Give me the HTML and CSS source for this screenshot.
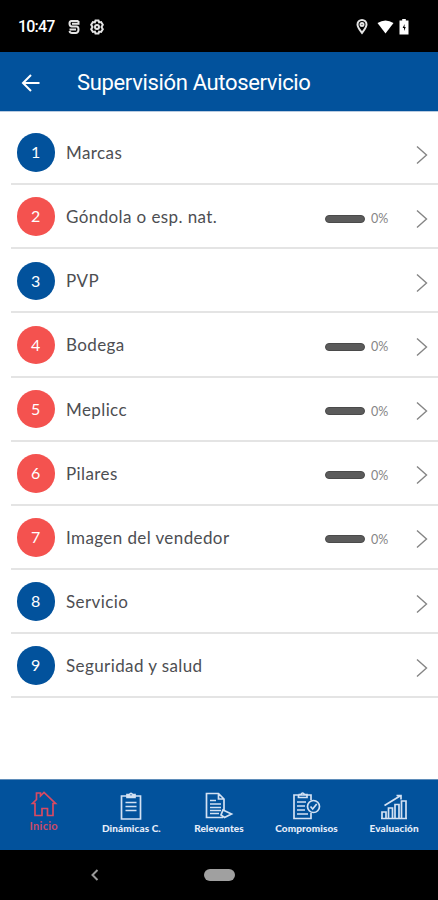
FILE: index.html
```html
<!DOCTYPE html>
<html lang="es">
<head>
<meta charset="utf-8">
<title>Supervisión Autoservicio</title>
<link rel="stylesheet" href="styles.css">
</head>
<body>
<div class="status">
  <span class="time">10:47</span>
  <svg class="st-s" width="12" height="16" viewBox="0 0 12 16"><path d="M10.500 2H3.500Q1.500 2 1.500 4.500T3.500 7.500H8.500Q10.500 7.500 10.500 10.500T8 14H4Q2 14 1.500 12M4 4.700H10.500V2M1.500 10.500H8" /></svg>
  <svg class="st-gear" width="16" height="16" viewBox="0 0 16 16"><path d="M6.500 1.500h3l.6 1.900 2-.4 1.700 2.800L12.500 8l1.300 2.200-1.700 2.800-2-.4-.6 1.900h-3l-.6-1.900-2 .4-1.700-2.800L3.500 8 2.200 5.800 3.900 3l2 .4z"/><circle cx="8" cy="8" r="2"/></svg>
  <span class="grow"></span>
  <svg class="st-pin" width="12" height="15" viewBox="0 0 12 15"><path d="M6 13.800C3.500 10.500 1.500 8.300 1.500 5.500a4.500 4.500 0 0 1 9 0C10.500 8.300 8.500 10.500 6 13.800z"/><circle cx="6" cy="5.500" r="1.500"/></svg>
  <svg class="st-wifi" width="17" height="14" viewBox="0 0 17 14"><path d="M.5 3Q8.500-2.200 16.500 3L8.500 13.500z"/></svg>
  <svg class="st-bat" width="10" height="16" viewBox="0 0 10 16"><path class="shell" d="M3.200 0h3.600v1.500H9.500V15.500H.5V1.500H3.200z"/><path class="bolt" d="M5.600 5L3.600 9h1.400v3L6.800 8H5.500z"/></svg>
</div>
<header class="bar">
  <svg class="back" width="20" height="18" viewBox="0 0 20 18"><path d="M18.500 9H2M10 1L2 9l8 8"/></svg>
  <h1>Supervisión Autoservicio</h1>
</header>
<main class="list">
  <div class="row"><span class="num">1</span><span class="name">Marcas</span><svg class="chev" width="12" height="20" viewBox="0 0 12 20"><path d="M1 1.500l9.500 8.500L1 18.500"/></svg></div>
  <div class="row"><span class="num red">2</span><span class="name">Góndola o esp. nat.</span><span class="meter"></span><span class="pct">0%</span><svg class="chev" width="12" height="20" viewBox="0 0 12 20"><path d="M1 1.500l9.500 8.500L1 18.500"/></svg></div>
  <div class="row"><span class="num">3</span><span class="name">PVP</span><svg class="chev" width="12" height="20" viewBox="0 0 12 20"><path d="M1 1.500l9.500 8.500L1 18.500"/></svg></div>
  <div class="row"><span class="num red">4</span><span class="name">Bodega</span><span class="meter"></span><span class="pct">0%</span><svg class="chev" width="12" height="20" viewBox="0 0 12 20"><path d="M1 1.500l9.500 8.500L1 18.500"/></svg></div>
  <div class="row"><span class="num red">5</span><span class="name">Meplicc</span><span class="meter"></span><span class="pct">0%</span><svg class="chev" width="12" height="20" viewBox="0 0 12 20"><path d="M1 1.500l9.500 8.500L1 18.500"/></svg></div>
  <div class="row"><span class="num red">6</span><span class="name">Pilares</span><span class="meter"></span><span class="pct">0%</span><svg class="chev" width="12" height="20" viewBox="0 0 12 20"><path d="M1 1.500l9.500 8.500L1 18.500"/></svg></div>
  <div class="row"><span class="num red">7</span><span class="name">Imagen del vendedor</span><span class="meter"></span><span class="pct">0%</span><svg class="chev" width="12" height="20" viewBox="0 0 12 20"><path d="M1 1.500l9.500 8.500L1 18.500"/></svg></div>
  <div class="row"><span class="num">8</span><span class="name">Servicio</span><svg class="chev" width="12" height="20" viewBox="0 0 12 20"><path d="M1 1.500l9.500 8.500L1 18.500"/></svg></div>
  <div class="row"><span class="num">9</span><span class="name">Seguridad y salud</span><svg class="chev" width="12" height="20" viewBox="0 0 12 20"><path d="M1 1.500l9.500 8.500L1 18.500"/></svg></div>
</main>
<nav class="tabs">
  <a class="tab active">
    <svg width="28" height="28" viewBox="0 0 28 28"><path d="M5 12.500H2.500L6.500 8.500V2H10.500v3L14 1.500 25.500 12.500H23V24.500H17.500V17.500H12V24.500H5z"/></svg>
    <span>Inicio</span>
  </a>
  <a class="tab">
    <svg width="28" height="28" viewBox="0 0 28 28"><path d="M4.500 4H23.500V27H4.500zM10 4.500V2.500H12.500Q14 0 15.500 2.500H18V5.500H10zM8.500 10.500H19.500M8.500 14.500H19.500M8.500 18.500H19.500"/></svg>
    <span>Dinámicas C.</span>
  </a>
  <a class="tab">
    <svg width="28" height="28" viewBox="0 0 28 28"><path d="M18 25.500H1.500V1.500H13.500L19 7V18M13.500 1.500V7H19M5 8.500H11M5 12H16M5 15.500H16M5 18.500H16M5 21.500H14M18 18L26.500 22 19.500 25.500 16 23z"/></svg>
    <span>Relevantes</span>
  </a>
  <a class="tab">
    <svg width="28" height="28" viewBox="0 0 28 28"><path d="M18 8V3H1V26.500H18V21M5.500 3V5.500H14V2.500H11.500Q9.500-.5 8 2.500H5.500M4 10H13M4 14H12M4 18H12M4 22H15"/><circle cx="20.500" cy="14.500" r="6"/><path d="M17.500 14.500l2.200 2.500 4-5"/></svg>
    <span>Compromisos</span>
  </a>
  <a class="tab">
    <svg width="28" height="28" viewBox="0 0 28 28"><path d="M2 26.500V20H6V26.500M8.500 26.500V16H12.500V26.500M15 26.500V12.500H19V26.500M21.500 26.500V9H26V26.500M1 26.500H27M4.500 13.500L20 4M16.500 3.500H21V7.500"/></svg>
    <span>Evaluación</span>
  </a>
</nav>
<footer class="sys">
  <svg width="8" height="12" viewBox="0 0 8 12"><path d="M6.500 1L1.500 6l5 5"/></svg>
  <span class="pill"></span>
</footer>
</body>
</html>
```

FILE: styles.css
```css
* { box-sizing: border-box; }
body {
  margin: 0;
  width: 438px;
  height: 900px;
  display: flex;
  flex-direction: column;
  background: #fff;
  overflow: hidden;
  font-family: Lato, sans-serif;
}
svg { display: block; flex: none; fill: none; overflow: visible; }

.status {
  height: 52px;
  background: #000;
  color: #fff;
  display: flex;
  align-items: center;
  padding: 1px 29px 0 18px;
}
.time { width: 50px; font: 500 16px/20px Roboto, sans-serif; letter-spacing: -0.8px; }
.grow { flex: 1; }
.st-s, .st-gear, .st-pin { stroke: #e4e4e4; stroke-width: 2; }
.st-gear { margin-left: 9px; }
.st-wifi { fill: #fff; margin: 0 5px 0 9px; }
.st-bat .shell { fill: #fff; }
.st-bat .bolt { fill: #000; }

.bar {
  height: 60px;
  background: #02529c;
  border-bottom: 1px solid #b9cbe0;
  display: flex;
  align-items: center;
  padding: 2px 0 0 21px;
}
.back { stroke: #fff; stroke-width: 2; }
h1 {
  margin: 1px 0 0 36px;
  color: #fff;
  font: 400 22px/28px Roboto, sans-serif;
  letter-spacing: -0.34px;
  white-space: nowrap;
}

.list { padding: 9px 0 0 11px; flex: 1; }
.row {
  height: 64.15px;
  border-bottom: 2px solid #e4e4e4;
  display: flex;
  align-items: center;
  padding: 1px 10px 0 5.5px;
}
.num {
  width: 38.5px;
  height: 38.5px;
  border-radius: 50%;
  background: #02529c;
  color: #fff;
  font-size: 16px;
  line-height: 38px;
  text-align: center;
}
.red { background: #f4524f; }
.name {
  flex: 1;
  margin-left: 11px;
  color: #4d4e52;
  font-size: 17px;
  letter-spacing: 0.4px;
  white-space: nowrap;
}
.meter { width: 40px; height: 8px; margin-top: 4px; border-radius: 4px; background: #5b5b5b; border: 1px solid #4a4a4a; }
.pct { width: 45px; margin: 4px 0 0 6px; font-size: 12.5px; color: #858585; }
.chev { stroke: #858585; stroke-width: 1.4; margin-top: 4px; }

.tabs {
  height: 71px;
  background: #02529c;
  border-top: 1px solid #5f8dba;
  display: flex;
}
.tab {
  flex: 1;
  display: flex;
  flex-direction: column;
  align-items: center;
  padding-top: 12px;
  color: #e6edfa;
  font-size: 10px;
  font-weight: 900;
  letter-spacing: 0.1px;
  line-height: 14px;
  white-space: nowrap;
}
.tab svg { stroke: #d3e1f3; stroke-width: 1.7; }
.tab span { margin-top: 1px; }
.active { color: #cb4a66; font-size: 11px; font-weight: 700; letter-spacing: 0.3px; padding-top: 11px; }
.active svg { stroke: #d94a62; }
.active span { margin-top: 0; }

.sys {
  height: 50px;
  background: #000;
  display: flex;
  align-items: center;
  padding-left: 91px;
}
.sys svg { stroke: #999; stroke-width: 2; }
.pill { width: 31px; height: 12px; border-radius: 6px; background: #a0a0a0; margin-left: 105px; }
```
